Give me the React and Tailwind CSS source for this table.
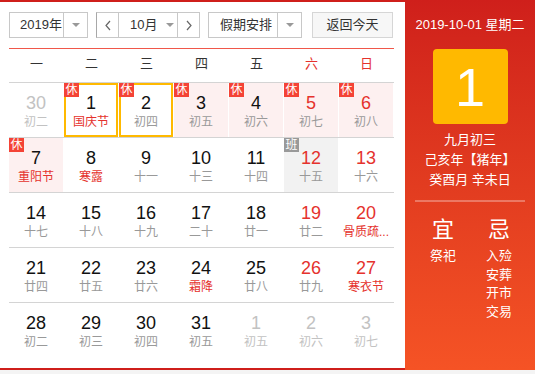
import React from "react";

const FONT = "font-['Liberation_Sans','Noto_Sans_CJK_SC',sans-serif]";

const rows = [
  [
    { d: "30", l: "初二", other: true },
    { d: "1", l: "国庆节", fest: true, badge: "休", sel: true },
    { d: "2", l: "初四", badge: "休", sel: true },
    { d: "3", l: "初五", badge: "休", pink: true },
    { d: "4", l: "初六", badge: "休", pink: true },
    { d: "5", l: "初七", badge: "休", pink: true, we: true },
    { d: "6", l: "初八", badge: "休", pink: true, we: true },
  ],
  [
    { d: "7", l: "重阳节", fest: true, badge: "休", pink: true },
    { d: "8", l: "寒露", fest: true },
    { d: "9", l: "十一" },
    { d: "10", l: "十三" },
    { d: "11", l: "十四" },
    { d: "12", l: "十五", we: true, badge: "班", gray: true },
    { d: "13", l: "十六", we: true },
  ],
  [
    { d: "14", l: "十七" },
    { d: "15", l: "十八" },
    { d: "16", l: "十九" },
    { d: "17", l: "二十" },
    { d: "18", l: "廿一" },
    { d: "19", l: "廿二", we: true },
    { d: "20", l: "骨质疏...", fest: true, we: true },
  ],
  [
    { d: "21", l: "廿四" },
    { d: "22", l: "廿五" },
    { d: "23", l: "廿六" },
    { d: "24", l: "霜降", fest: true },
    { d: "25", l: "廿八" },
    { d: "26", l: "廿九", we: true },
    { d: "27", l: "寒衣节", fest: true, we: true },
  ],
  [
    { d: "28", l: "初二" },
    { d: "29", l: "初三" },
    { d: "30", l: "初四" },
    { d: "31", l: "初五" },
    { d: "1", l: "初五", other: true },
    { d: "2", l: "初六", other: true },
    { d: "3", l: "初七", other: true },
  ],
];

function Arrow() {
  return (
    <span className="inline-block w-0 h-0 border-x-[4px] border-x-transparent border-t-[4px] border-t-[#999]" />
  );
}

function Cell({ c }) {
  let bg = "bg-white";
  if (c.pink) bg = "bg-[#fdf0f0]";
  if (c.gray) bg = "bg-[#f2f2f2]";
  const numColor = c.other ? "text-[#c2c2c2]" : c.we ? "text-[#e5322d]" : "text-[#111]";
  const lunColor = c.other ? "text-[#c2c2c2]" : c.fest ? "text-[#e5322d]" : "text-[#999]";
  return (
    <div
      className={`relative w-[54px] h-[54px] mr-px flex flex-col items-center ${bg} ${
        c.sel ? "border-2 border-[#ffb900] pt-[8px]" : "pt-[10px]"
      }`}
    >
      {c.badge && (
        <span
          className={`absolute ${c.sel ? "-top-[2px] -left-[2px]" : "top-0 left-0"} w-[15px] h-[14px] text-[12px] leading-[14px] text-white text-center ${
            c.badge === "休" ? "bg-[#f44336]" : "bg-[#999]"
          }`}
        >
          {c.badge}
        </span>
      )}
      <div className={`text-[18px] leading-[20px] ${numColor}`}>{c.d}</div>
      <div className={`text-[12px] leading-[18px] whitespace-nowrap ${lunColor}`}>{c.l}</div>
    </div>
  );
}

export default function App() {
  const week = ["一", "二", "三", "四", "五", "六", "日"];
  return (
    <div className={`w-[535px] h-[374px] bg-[#f4f4f4] ${FONT}`}>
      <div className="flex w-[535px] h-[370px]">
        <div className="w-[405px] h-[370px] bg-white border-y-2 border-[#cf1f1b] px-[9px] pt-[10px]">
          {/* toolbar */}
          <div className="flex h-[26px] text-[13px] text-[#333]">
            <div className="flex w-[79px] h-[26px] border border-[#c8c8c8]">
              <div className="w-[54px] border-r border-[#c8c8c8] pl-[10px] leading-[24px]">2019年</div>
              <div className="flex-1 flex items-center justify-center">
                <Arrow />
              </div>
            </div>
            <div className="flex ml-[8px] w-[104px] h-[26px] border border-[#c8c8c8] border-l-[#a8a8a8]">
              <div className="w-[22px] border-r border-[#c8c8c8] flex items-center justify-center">
                <svg width="8" height="11" viewBox="0 0 8 11">
                  <polyline points="6,1 2,5.5 6,10" fill="none" stroke="#666" strokeWidth="1.2" />
                </svg>
              </div>
              <div className="w-[59px] border-r border-[#c8c8c8] flex items-center pl-[11px]">
                <span className="leading-[24px]">10月</span>
                <span className="ml-[9px] flex items-center">
                  <Arrow />
                </span>
              </div>
              <div className="flex-1 flex items-center justify-center">
                <svg width="8" height="11" viewBox="0 0 8 11">
                  <polyline points="2,1 6,5.5 2,10" fill="none" stroke="#666" strokeWidth="1.2" />
                </svg>
              </div>
            </div>
            <div className="flex ml-[8px] w-[94px] h-[26px] border border-[#c8c8c8]">
              <div className="w-[69px] border-r border-[#c8c8c8] pl-[11px] leading-[24px]">假期安排</div>
              <div className="flex-1 flex items-center justify-center">
                <Arrow />
              </div>
            </div>
            <div className="ml-[10px] w-[81px] h-[26px] border border-[#d6d6d6] bg-[#f7f7f7] text-center leading-[24px]">
              返回今天
            </div>
          </div>
          <div className="mt-[10px] w-[385px] h-px bg-[#f0574a]" />
          {/* weekday header */}
          <div className="flex w-[385px] h-[33px]">
            {week.map((w, i) => (
              <div
                key={w}
                className={`w-[55px] text-center text-[13px] leading-[30px] ${
                  i >= 5 ? "text-[#e5322d]" : "text-[#333]"
                }`}
              >
                {w}
              </div>
            ))}
          </div>
          {/* grid */}
          <div className="w-[385px]">
            {rows.map((r, ri) => (
              <div key={ri} className="flex border-t border-[#d4d4d4]">
                {r.map((c, ci) => (
                  <Cell key={ci} c={c} />
                ))}
              </div>
            ))}
          </div>
        </div>
        {/* right panel */}
        <div className="w-[130px] h-[370px] bg-linear-to-b from-[#cf1f1b] to-[#f55325] text-white flex flex-col items-center">
          <div className="pt-[15px] text-[13px] leading-[20px] whitespace-nowrap">2019-10-01 星期二</div>
          <div className="mt-[14px] w-[75px] h-[75px] rounded-[4px] bg-[#ffb900] flex items-center justify-center text-[54px] leading-none">
            1
          </div>
          <div className="mt-[6px] text-[13px] leading-[20px] text-center">
            <div>九月初三</div>
            <div>己亥年【猪年】</div>
            <div>癸酉月 辛未日</div>
          </div>
          <div className="mt-[10px] w-[110px] h-[2px] bg-white/30" />
          <div className="mt-[15px] flex gap-[16px] pl-[2px]">
            <div className="w-[40px] flex flex-col items-center">
              <div className="text-[22px] leading-[26px]">宜</div>
              <div className="mt-[4px] text-[13px] leading-[18.5px]">祭祀</div>
            </div>
            <div className="w-[40px] flex flex-col items-center">
              <div className="text-[22px] leading-[26px]">忌</div>
              <div className="mt-[4px] text-[13px] leading-[18.5px] text-center">
                <div>入殓</div>
                <div>安葬</div>
                <div>开市</div>
                <div>交易</div>
              </div>
            </div>
          </div>
        </div>
      </div>
    </div>
  );
}
